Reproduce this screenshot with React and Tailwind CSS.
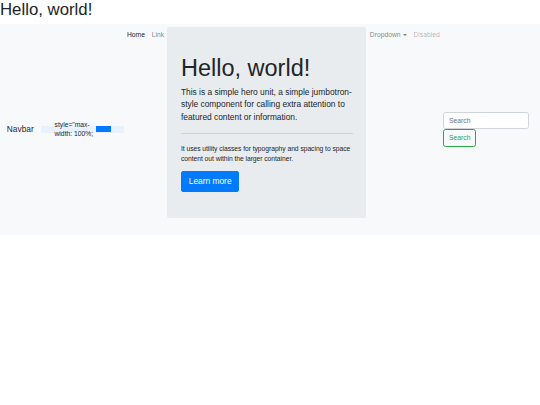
import React from 'react'

const links = [
    { label: 'Home', cls: 'text-black/90' },
    { label: 'Link', cls: 'text-black/50' },
]

export default function App() {
    return (
        <div className="min-h-screen bg-white text-[#212529] font-['Liberation_Sans',Arial,sans-serif]">
            <h1 className="text-[16.8px] leading-[1.2] font-normal mb-[3.4px]">Hello, world!</h1>

            {/* navbar */}
            <nav className="flex items-center bg-[#f8f9fa] px-[6.75px] py-[3.4px]">
                <a className="text-[8.4px] leading-[1.5] text-black/90 mr-[6.75px]">Navbar</a>

                {/* broken progress bar */}
                <div className="flex items-center w-[83px] h-[7px] bg-[#e7f1ff] pl-[14px]">
                    <span className="w-[41px] text-[6.75px] leading-[1.35] text-[#212529]">style="max-width: 100%;</span>
                    <span className="w-[15px] h-[6px] bg-[#007bff]" />
                </div>

                <ul className="flex items-start">
                    {links.map((l) => (
                        <li key={l.label}>
                            <a className={`block px-[3.4px] py-[3.4px] text-[6.75px] leading-[1.5] ${l.cls}`}>{l.label}</a>
                        </li>
                    ))}
                    <li>
                        <div className="w-[199px] bg-[#e9ecef] rounded-[2px] px-[13.5px] pt-[27px] pb-[26.5px] mb-[13.5px]">
                            <h2 className="text-[23.5px] leading-[1.2] font-normal mb-[3.4px]">Hello, world!</h2>
                            <p className="text-[8.4px] leading-[1.5]">
                                This is a simple hero unit, a simple jumbotron-style component for calling extra attention to featured content or information.
                            </p>
                            <hr className="mt-[10px] mb-[9.5px] border-black/10" />
                            <p className="text-[6.75px] leading-[1.5] tracking-[-0.05px] mb-[6.5px]">
                                It uses utility classes for typography and spacing to space content out within the larger container.
                            </p>
                            <a className="block w-fit bg-[#007bff] border border-[#007bff] text-white text-[8.4px] leading-[1.5] px-[6.75px] py-[3.4px] rounded-[2px]">
                                Learn more
                            </a>
                        </div>
                    </li>
                    <li>
                        <a className="flex items-center px-[3.4px] py-[3.4px] text-[6.75px] leading-[1.5] text-black/50">
                            Dropdown
                            <span className="ml-[2px] w-0 h-0 border-t-[2px] border-x-[2px] border-x-transparent border-t-current" />
                        </a>
                    </li>
                    <li>
                        <a className="block px-[3.4px] py-[3.4px] text-[6.75px] leading-[1.5] text-black/30">Disabled</a>
                    </li>
                </ul>

                {/* search form */}
                <form className="flex flex-col items-start">
                    <input
                        placeholder="Search"
                        className="w-[86px] h-[17px] bg-white border border-[#ced4da] rounded-[2.5px] px-[5px] text-[6.75px] placeholder:text-[#6c757d] outline-none"
                    />
                    <button type="button" className="border border-[#28a745] text-[#28a745] text-[6.75px] leading-[1.5] px-[5px] py-[2.5px] rounded-[2.5px] outline-none">
                        Search
                    </button>
                </form>
            </nav>
        </div>
    )
}
